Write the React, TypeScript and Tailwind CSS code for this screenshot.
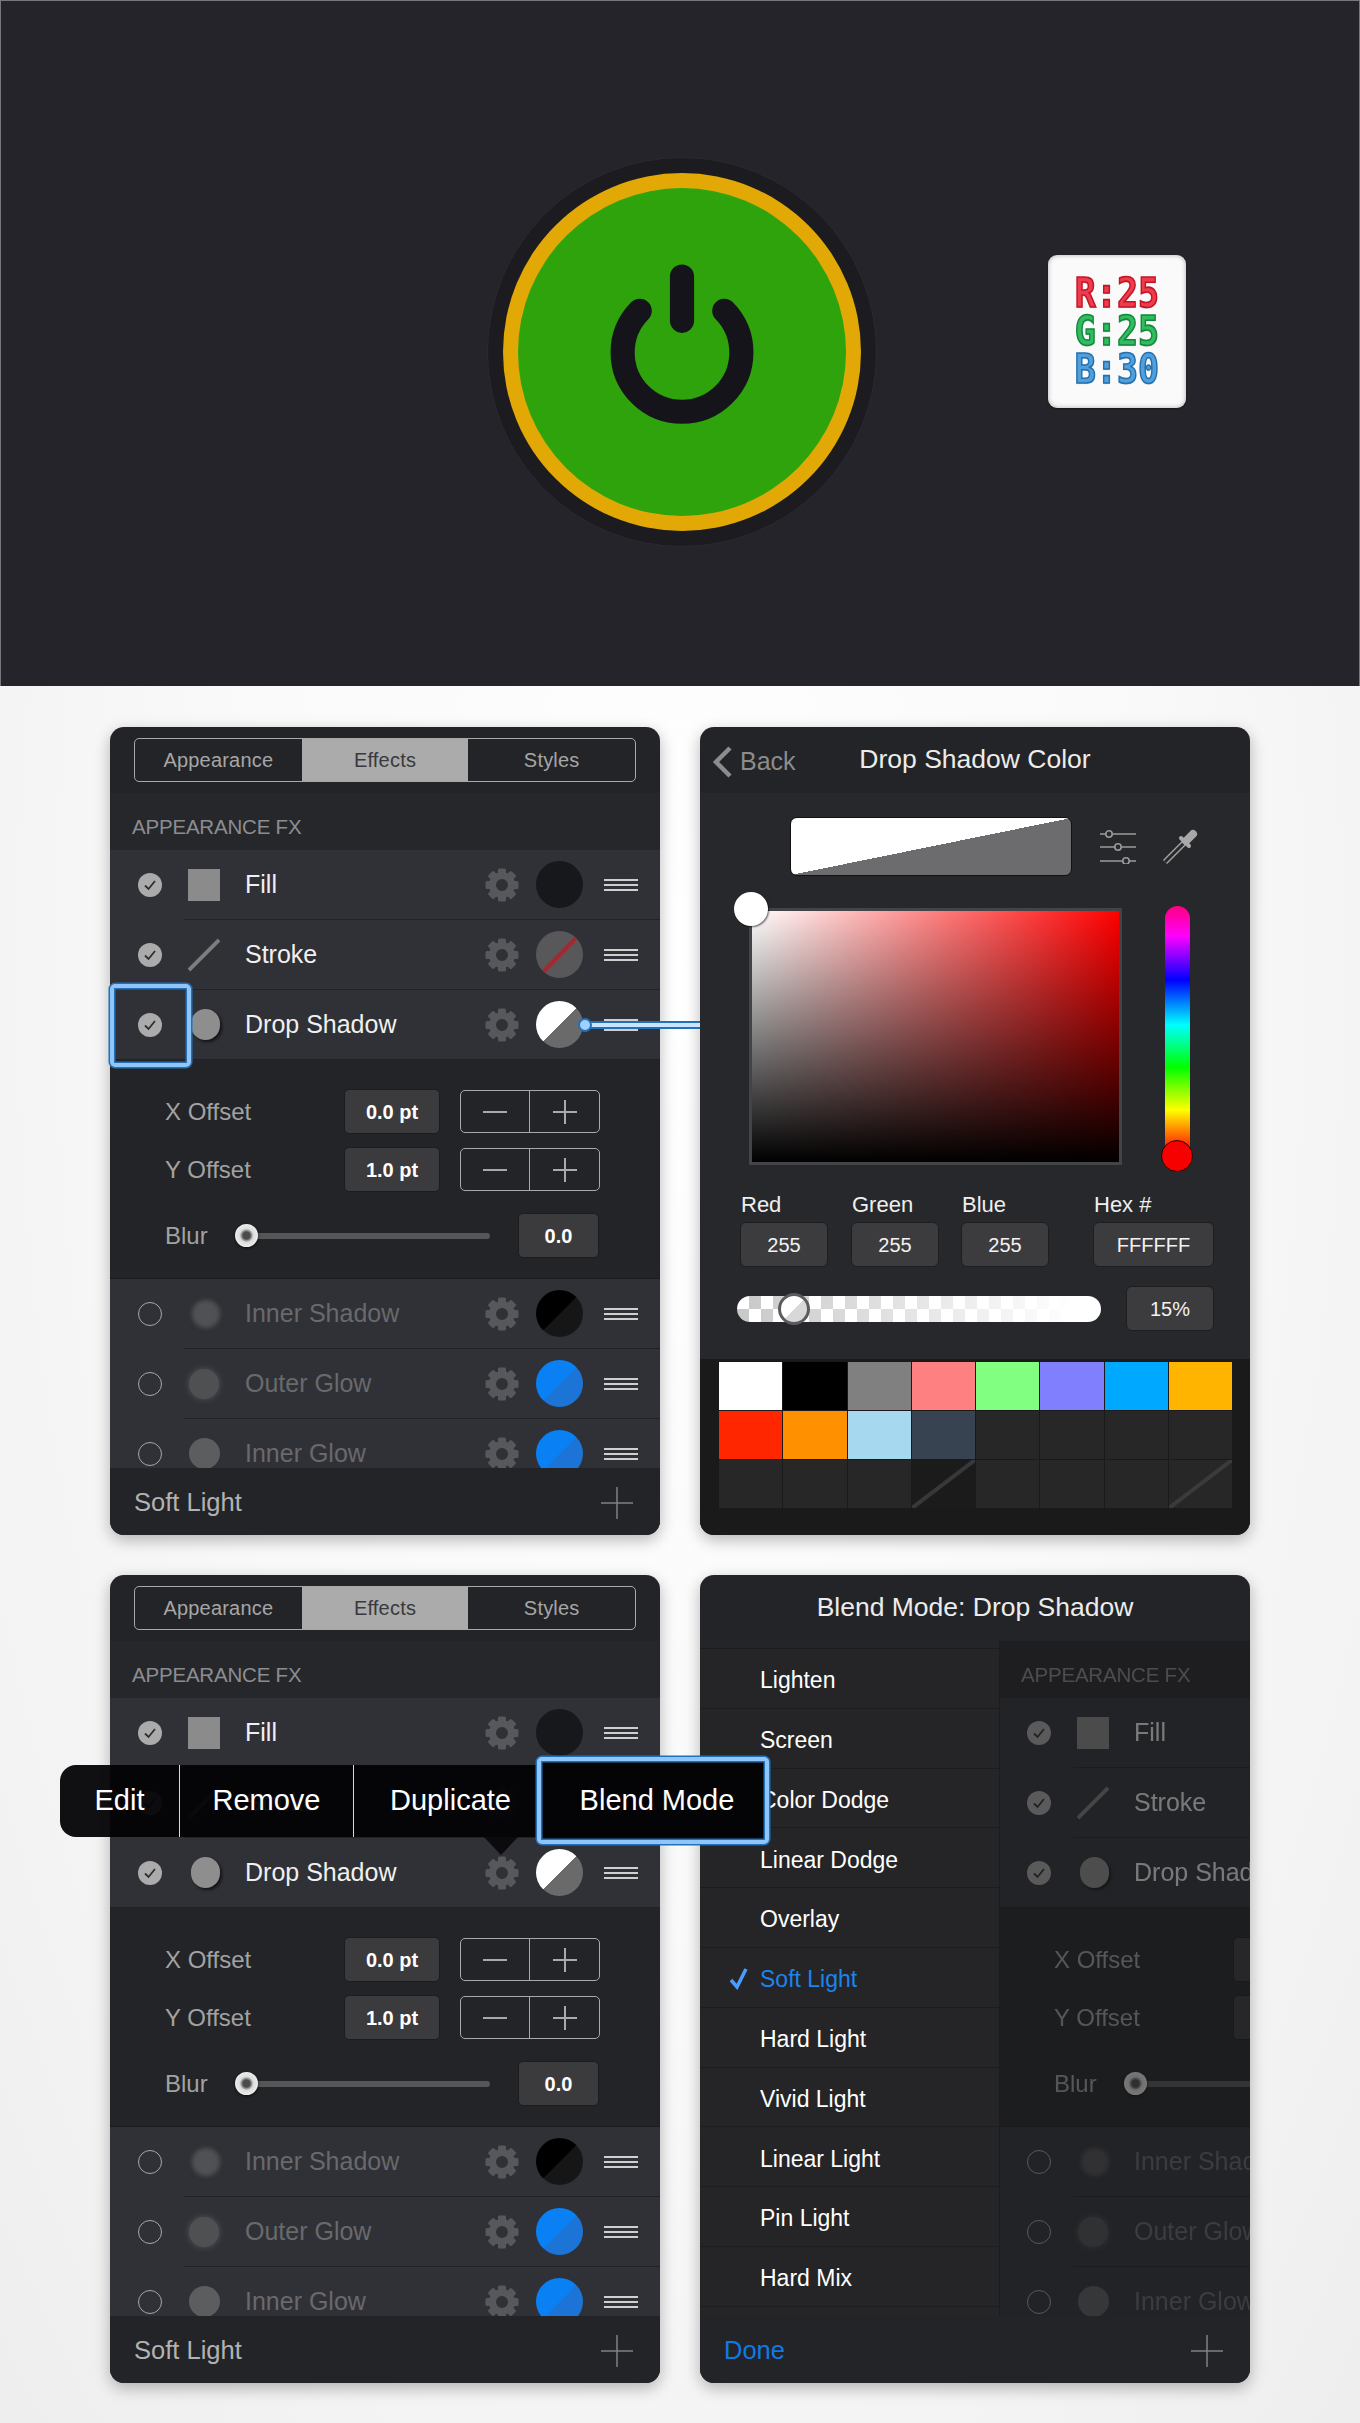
import React from "react";

const Gear = () => (
  <svg width="34" height="34" viewBox="0 0 34 34" className="shrink-0">
    {[0, 45, 90, 135, 180, 225, 270, 315].map((a) => (
      <rect key={a} x="13" y="0.5" width="8" height="8" rx="1.5" fill="#57585c" transform={`rotate(${a} 17 17)`} />
    ))}
    <circle cx="17" cy="17" r="9.5" fill="none" stroke="#57585c" strokeWidth="7" />
  </svg>
);

const Burger = () => (
  <div className="w-[34px] flex flex-col gap-[3px] shrink-0">
    <div className="h-[2px] bg-[#cfcfcf]" />
    <div className="h-[2px] bg-[#cfcfcf]" />
    <div className="h-[2px] bg-[#cfcfcf]" />
  </div>
);

const Check = () => (
  <div className="w-[24px] h-[24px] rounded-full bg-[#ababab] flex items-center justify-center shrink-0">
    <svg width="14" height="12" viewBox="0 0 14 12">
      <path d="M2 6.5 L5.5 10 L12 2" fill="none" stroke="#2d2e32" strokeWidth="1.8" />
    </svg>
  </div>
);

const Radio = () => <div className="w-[24px] h-[24px] rounded-full border-[1.5px] border-[#a8a8a8] shrink-0" />;

const Plus = ({ c = "#aaa", s = 24, w = 2 }: { c?: string; s?: number; w?: number }) => (
  <svg width={s} height={s} viewBox={`0 0 ${s} ${s}`}>
    <path d={`M0 ${s / 2} H${s} M${s / 2} 0 V${s}`} stroke={c} strokeWidth={w} fill="none" />
  </svg>
);

type RowProps = {
  label: string;
  on: boolean;
  icon: React.ReactNode;
  swatch: React.ReactNode;
};

const Row = ({ label, on, icon, swatch }: RowProps) => (
  <div className="h-[69px] flex items-center pl-[28px] pr-[22px] shrink-0">
    {on ? <Check /> : <Radio />}
    <div className="ml-[26px] w-[32px] h-[32px] flex items-center justify-center shrink-0">{icon}</div>
    <div className={on ? "ml-[25px] flex-1 text-[25px] text-[#f0f0f0]" : "ml-[25px] flex-1 text-[25px] text-[#68696d]"}>{label}</div>
    <Gear />
    <div className="ml-[17px] mr-[21px] shrink-0">{swatch}</div>
    <Burger />
  </div>
);

const Divider = () => <div className="ml-[74px] h-px bg-[#212226] shrink-0" />;

const Stepper = () => (
  <div className="ml-[20px] w-[140px] h-[43px] rounded-[5px] border-[1.5px] border-[#a8a8a8] flex">
    <div className="w-[69px] flex items-center justify-center border-r-[1.5px] border-[#a8a8a8]">
      <div className="w-[24px] h-[2px] bg-[#a8a8a8]" />
    </div>
    <div className="flex-1 flex items-center justify-center">
      <Plus />
    </div>
  </div>
);

const ValueBox = ({ v, w }: { v: string; w: string }) => (
  <div className={`${w} h-[45px] rounded-[5px] bg-[#3b3b3d] border border-[#1c1c1e] flex items-center justify-center text-[20px] font-bold text-white shrink-0`}>
    {v}
  </div>
);

const Body = () => (
  <div className="h-[675px] w-[550px] overflow-hidden flex flex-col bg-[#26272b] shrink-0">
    <div className="h-[57px] flex items-center pl-[22px] text-[20.5px] tracking-[-0.2px] text-[#8c8d90] shrink-0 pt-[12px]">APPEARANCE FX</div>
    <div className="bg-[#303136] flex flex-col">
      <Row label="Fill" on icon={<div className="w-[32px] h-[32px] bg-[#8b8b8b]" />} swatch={<div className="w-[47px] h-[47px] rounded-full bg-[#17181c]" />} />
      <Divider />
      <Row
        label="Stroke"
        on
        icon={
          <svg width="34" height="34" viewBox="0 0 34 34">
            <path d="M1 33 L33 1" stroke="#7d7d7d" strokeWidth="4" />
          </svg>
        }
        swatch={
          <div className="w-[47px] h-[47px] rounded-full bg-[#58585a] overflow-hidden">
            <svg width="47" height="47" viewBox="0 0 47 47">
              <path d="M6 42 L41 6" stroke="#a6282e" strokeWidth="4" />
            </svg>
          </div>
        }
      />
      <Divider />
      <Row
        label="Drop Shadow"
        on
        icon={<div className="w-[31px] h-[31px] rounded-full bg-[#8e8e8e] ml-[3px] shadow-[2px_2px_3px_rgba(0,0,0,.6)]" />}
        swatch={<div className="w-[47px] h-[47px] rounded-full bg-[linear-gradient(to_bottom_right,#fff_50%,#6a6a6a_50%)]" />}
      />
      <div className="h-px bg-[#212226]" />
    </div>
    <div className="h-[218px] bg-[#232427] flex flex-col pt-[29px] shrink-0">
      <div className="flex items-center pl-[55px]">
        <div className="w-[179px] text-[24px] text-[#a2a2a2]">X Offset</div>
        <ValueBox v="0.0 pt" w="w-[96px]" />
        <Stepper />
      </div>
      <div className="flex items-center pl-[55px] mt-[13px]">
        <div className="w-[179px] text-[24px] text-[#a2a2a2]">Y Offset</div>
        <ValueBox v="1.0 pt" w="w-[96px]" />
        <Stepper />
      </div>
      <div className="flex items-center pl-[55px] mt-[21px]">
        <div className="w-[70px] text-[24px] text-[#a2a2a2]">Blur</div>
        <div className="w-[255px] h-[23px] relative flex items-center shrink-0">
          <div className="ml-[10px] flex-1 h-[6px] rounded-full bg-[#565658]" />
          <div className="absolute left-0 top-0 w-[23px] h-[23px] rounded-full bg-[radial-gradient(circle,#4c4c4c_0_22%,#8a8a8a_30%,#dcdcdc_42%,#fff_100%)] shadow-[0_1px_3px_rgba(0,0,0,.7)]" />
        </div>
        <div className="ml-[28px]">
          <ValueBox v="0.0" w="w-[81px]" />
        </div>
      </div>
    </div>
    <div className="h-px bg-[#1b1c1f] shrink-0" />
    <div className="bg-[#303136] flex flex-col shrink-0">
      <Row
        label="Inner Shadow"
        on={false}
        icon={<div className="w-[28px] h-[28px] rounded-full bg-[#505154] ml-[3px] blur-[2px]" />}
        swatch={<div className="w-[47px] h-[47px] rounded-full bg-[linear-gradient(to_bottom_right,#000_50%,#161616_50%)]" />}
      />
      <Divider />
      <Row
        label="Outer Glow"
        on={false}
        icon={<div className="w-[30px] h-[30px] rounded-full bg-[#4f5052] shadow-[0_0_6px_#55565a]" />}
        swatch={<div className="w-[47px] h-[47px] rounded-full bg-[linear-gradient(to_bottom_right,#0a80f5_50%,#1b74d6_50%)]" />}
      />
      <Divider />
      <Row
        label="Inner Glow"
        on={false}
        icon={<div className="w-[31px] h-[31px] rounded-full bg-[#5c5d5f]" />}
        swatch={<div className="w-[47px] h-[47px] rounded-full bg-[linear-gradient(to_bottom_right,#0a80f5_50%,#1b74d6_50%)]" />}
      />
    </div>
  </div>
);

const Shell = ({ children }: { children: React.ReactNode }) => (
  <div className="w-[550px] h-[808px] rounded-[14px] overflow-hidden flex flex-col bg-[#232427] shadow-[0_5px_16px_rgba(0,0,0,.28)]">{children}</div>
);

const Foot = ({ children }: { children: React.ReactNode }) => (
  <div className="h-[67px] flex items-center justify-between bg-[#232427] pl-[24px] pr-[27px] pt-[2px] shrink-0">{children}</div>
);

const BigPlus = () => (
  <svg width="32" height="32" viewBox="0 0 32 32">
    <path d="M0 16 H32 M16 0 V32" stroke="#808080" strokeWidth="1.5" fill="none" />
  </svg>
);

const Effects = () => (
  <Shell>
    <div className="h-[66px] flex items-center pl-[24px] shrink-0">
      <div className="w-[502px] h-[44px] rounded-[5px] border-[1.5px] border-[#a8a8a8] flex overflow-hidden text-[20px] tracking-[0.2px]">
        <div className="flex-1 flex items-center justify-center text-[#a6a6a6]">Appearance</div>
        <div className="flex-1 flex items-center justify-center bg-[#ababab] text-[#3a3a3c]">Effects</div>
        <div className="flex-1 flex items-center justify-center text-[#a6a6a6]">Styles</div>
      </div>
    </div>
    <Body />
    <Foot>
      <div className="text-[25.5px] text-[#b2b2b2]">Soft Light</div>
      <BigPlus />
    </Foot>
  </Shell>
);

const Field = ({ v, w }: { v: string; w: string }) => (
  <div className={`${w} h-[45px] rounded-[6px] bg-[#3c3c3e] border border-[#1e1e20] flex items-center justify-center text-[20px] text-[#f2f2f2]`}>{v}</div>
);

const FieldCol = ({ l, v, w }: { l: string; v: string; w: string }) => (
  <div className="flex flex-col">
    <div className="h-[30px] pl-px text-[22px] leading-[26px] text-[#efefef]">{l}</div>
    <Field v={v} w={w} />
  </div>
);

const palette = ["#ffffff", "#000000", "#808080", "#ff8080", "#80ff80", "#8080ff", "#00a8ff", "#ffb400", "#ff2600", "#ff9000", "#a6d8f0", "#374350"];

const ColorPanel = () => (
  <Shell>
    <div className="h-[66px] relative flex items-center justify-center shrink-0">
      <div className="absolute left-[11px] top-[16px] flex items-center">
        <svg width="22" height="32" viewBox="0 0 22 32">
          <path d="M19 2 L5 16 L19 30" fill="none" stroke="#8c8c8c" strokeWidth="4.5" />
        </svg>
        <span className="ml-[7px] text-[25px] text-[#8c8c8c]">Back</span>
      </div>
      <div className="text-[26.5px] text-[#ececec]">Drop Shadow Color</div>
    </div>
    <div className="flex-1 bg-[#27282b] flex flex-col">
      <div className="flex items-center pl-[90px] pt-[24px]">
        <div className="w-[282px] h-[59px] rounded-[7px] border-[1.5px] border-[#111] bg-[linear-gradient(to_bottom_right,#fff_50%,#6c6c6e_50%)]" />
        <svg width="36" height="34" viewBox="0 0 36 34" className="ml-[28px]">
          <g stroke="#9a9a9a" strokeWidth="1.6" fill="#27282b">
            <path d="M0 4 H36 M0 17 H36 M0 31 H36" />
            <circle cx="9" cy="4" r="3.2" />
            <circle cx="18" cy="17" r="3.2" />
            <circle cx="26" cy="31" r="3.2" />
          </g>
        </svg>
        <svg width="36" height="36" viewBox="0 0 36 36" className="ml-[26px]">
          <path d="M3 33 L22 14" stroke="#a0a0a0" strokeWidth="6" />
          <path d="M3 33 L22 14" stroke="#27282b" strokeWidth="3" />
          <path d="M19 9 L27 17" stroke="#a8a8a8" strokeWidth="4" strokeLinecap="round" />
          <path d="M24 12 L31 5" stroke="#a8a8a8" strokeWidth="8" strokeLinecap="round" />
        </svg>
      </div>
      <div className="flex items-start pl-[49px] mt-[32px]">
        <div className="relative w-[373px] h-[257px] border-[3px] border-[#444446] bg-[linear-gradient(to_top,#000,rgba(0,0,0,0)),linear-gradient(to_right,#fff,#f00)] shrink-0">
          <div className="absolute left-[-18px] top-[-19px] w-[34px] h-[34px] rounded-full bg-white shadow-[1px_1px_2px_rgba(0,0,0,.6)]" />
        </div>
        <div className="relative ml-[43px] -mt-[2px] w-[25px] h-[260px] rounded-full bg-[linear-gradient(to_bottom,#ff0080_0px,#f0f_30px,#00f_74px,#0ff_119px,#0f0_161px,#ff0_204px,#f00_247px)] shrink-0">
          <div className="absolute left-[-4px] bottom-[-6px] w-[32px] h-[32px] rounded-full bg-[#f60000] border-[1.5px] border-[#2a0505]" />
        </div>
      </div>
      <div className="flex pl-[40px] mt-[26px]">
        <FieldCol l="Red" v="255" w="w-[88px]" />
        <div className="ml-[23px]">
          <FieldCol l="Green" v="255" w="w-[88px]" />
        </div>
        <div className="ml-[22px]">
          <FieldCol l="Blue" v="255" w="w-[88px]" />
        </div>
        <div className="ml-[44px]">
          <FieldCol l="Hex #" v="FFFFFF" w="w-[121px]" />
        </div>
      </div>
      <div className="flex items-center pl-[37px] mt-[19px]">
        <div className="relative w-[364px] h-[26px] rounded-full bg-[linear-gradient(to_right,rgba(255,255,255,.1),#fff_92%),repeating-conic-gradient(#c2c2c2_0_25%,#fff_0_50%)] [background-size:100%_100%,24px_26px]">
          <div className="absolute left-[41px] top-[-3px] w-[32px] h-[32px] rounded-full border-[3px] border-[#5b5b5d] bg-[linear-gradient(to_bottom_right,#fff_50%,#d8d8d8_50%)]" />
        </div>
        <div className="ml-[25px]">
          <Field v="15%" w="w-[88px]" />
        </div>
      </div>
    </div>
    <div className="h-[176px] bg-[#1a1a1b] pl-[19px] pt-[3px] shrink-0">
      <div className="grid grid-cols-8 gap-px w-[513px] auto-rows-[48px]">
        {Array.from({ length: 24 }).map((_, i) =>
          i < 12 ? (
            <div key={i} style={{ background: palette[i] }} />
          ) : i === 19 ? (
            <div key={i} className="bg-[#1b1b1c]">
              <svg width="63" height="48" viewBox="0 0 63 48" className="block">
                <path d="M0 48 L63 0" stroke="#38383a" strokeWidth="4" />
              </svg>
            </div>
          ) : i === 23 ? (
            <div key={i} className="bg-[#272727]">
              <svg width="63" height="48" viewBox="0 0 63 48" className="block">
                <path d="M0 48 L63 0" stroke="#3b3b3d" strokeWidth="4" />
              </svg>
            </div>
          ) : (
            <div key={i} className="bg-[#272727]" />
          )
        )}
      </div>
    </div>
  </Shell>
);

const modes = ["Lighten", "Screen", "Color Dodge", "Linear Dodge", "Overlay", "Soft Light", "Hard Light", "Vivid Light", "Linear Light", "Pin Light", "Hard Mix"];

const BlendPanel = () => (
  <Shell>
    <div className="h-[66px] flex items-center justify-center text-[26.5px] text-[#ececec] shrink-0">Blend Mode: Drop Shadow</div>
    <div className="flex h-[675px] shrink-0">
      <div className="w-[300px] bg-[#252527] border-r border-[#1c1c1e] flex flex-col shrink-0">
        <div className="h-[8px] border-b border-[#1d1d1f] shrink-0" />
        {modes.map((m) => (
          <div key={m} className="h-[59.8px] relative flex items-center pl-[60px] pt-[4px] border-b border-[#1d1d1f] shrink-0">
            {m === "Soft Light" && (
              <svg width="20" height="22" viewBox="0 0 20 22" className="absolute left-[29px] top-[20px]">
                <path d="M2 12 L8 19 L17 1" fill="none" stroke="#4a9eff" strokeWidth="3.5" />
              </svg>
            )}
            <span className={m === "Soft Light" ? "text-[23px] text-[#1b84ee]" : "text-[23px] text-white"}>{m}</span>
          </div>
        ))}
      </div>
      <div className="w-[250px] overflow-hidden bg-[#18181a]">
        <div className="opacity-45 w-[550px] -ml-px">
          <Body />
        </div>
      </div>
    </div>
    <Foot>
      <div className="text-[25.5px] text-[#0f7ae5]">Done</div>
      <BigPlus />
    </Foot>
  </Shell>
);

const highlight =
  "border-[4px] border-[#8ec6fc] rounded-[5px] shadow-[0_0_0_1.5px_#2470b8,inset_0_0_0_1.5px_#2470b8]";

const BadgeLine = ({ t, cls }: { t: string; cls: string }) => (
  <div className={`h-[38px] leading-[38px] text-[35px] font-bold scale-y-[1.18] [text-shadow:0_1px_1px_rgba(0,0,0,.25)] ${cls}`}>{t}</div>
);

export default function App() {
  return (
    <div className="w-[1360px] h-[2423px] overflow-hidden font-['Liberation_Sans',Arial,sans-serif] bg-[radial-gradient(ellipse_at_50%_40%,#ffffff_0%,#f9f9f9_50%,#eeeeee_100%)]">
      <div className="h-[686px] bg-[#24242a] border-x border-t border-[#77777b] flex items-center pl-[486px] pt-[17px]">
        <div className="w-[390px] h-[390px] rounded-full bg-[#1b1b20] border border-[#2a2a30] flex items-center justify-center shrink-0">
          <div className="w-[358px] h-[358px] rounded-full bg-[#e2a906] flex items-center justify-center">
            <div className="w-[328px] h-[328px] rounded-full bg-[#2ea30c]">
              <svg width="328" height="328" viewBox="0 0 326 326">
                <g fill="none" stroke="#14141a" strokeWidth="24" strokeLinecap="round">
                  <path d="M163 88 V132" />
                  <path d="M121 122 A59 59 0 1 0 205 122" />
                </g>
              </svg>
            </div>
          </div>
        </div>
        <div className="ml-[171px] mb-[42px] w-[138px] h-[153px] rounded-[9px] bg-[#fafafa] shadow-[inset_0_0_5px_rgba(0,0,0,.3),0_1px_2px_rgba(0,0,0,.4)] flex flex-col items-center justify-center font-['DejaVu_Sans_Mono',monospace] shrink-0">
          <BadgeLine t="R:25" cls="text-[#ee3c4c] [-webkit-text-stroke:1.4px_#c21426]" />
          <BadgeLine t="G:25" cls="text-[#33bb60] [-webkit-text-stroke:1.4px_#128a3c]" />
          <BadgeLine t="B:30" cls="text-[#529fdc] [-webkit-text-stroke:1.4px_#2272b0]" />
        </div>
      </div>
      <div className="pl-[110px] pt-[41px] flex flex-col gap-[40px]">
        <div className="flex gap-[40px]">
          <div className="relative">
            <Effects />
            <div className={`absolute left-0 top-[257px] w-[81px] h-[83px] ${highlight}`} />
            <div className="absolute left-[480px] top-[294px] w-[110px] h-[8px] border-y-2 border-[#2470b8] bg-[#c8e4ff]" />
            <div className="absolute left-[468px] top-[291px] w-[14px] h-[14px] rounded-full bg-[#9fd0ff] border-2 border-[#2470b8]" />
          </div>
          <ColorPanel />
        </div>
        <div className="flex gap-[40px]">
          <div className="relative z-10">
            <Effects />
            <div className="absolute left-[-50px] top-[190px] w-[700px] h-[72px] rounded-l-[16px] bg-[rgba(3,3,6,.95)] flex items-center text-[29px] text-white">
              <div className="w-[120px] h-full flex items-center justify-center border-r border-[#d8d8d8] shrink-0">Edit</div>
              <div className="w-[174px] h-full flex items-center justify-center border-r border-[#d8d8d8] shrink-0">Remove</div>
              <div className="w-[183px] h-full flex items-center justify-center pl-[10px] shrink-0">Duplicate</div>
              <div className={`absolute left-[477px] top-[-8px] w-[232px] h-[87px] flex items-center justify-center pl-[8px] bg-[#040406] ${highlight}`}>Blend Mode</div>
              <div className="absolute left-[424px] top-[72px] w-0 h-0 border-x-[17px] border-t-[18px] border-x-transparent border-t-[#0b0b0e]" />
            </div>
          </div>
          <BlendPanel />
        </div>
      </div>
    </div>
  );
}
